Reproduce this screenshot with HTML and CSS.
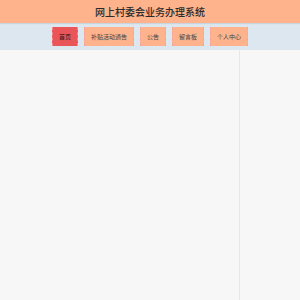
FILE: index.html
```html
<!DOCTYPE html>
<html lang="zh-CN">
<head>
    <meta charset="UTF-8">
    <meta name="viewport" content="width=device-width, initial-scale=1.0">
    <title>网上村委会业务办理系统</title>
    <link rel="stylesheet" href="styles.css">
</head>
<body>
    <header class="site-header">
        <h1>网上村委会业务办理系统</h1>
    </header>
    <nav class="site-nav">
        <a href="#" class="nav-item active">首页</a>
        <a href="#" class="nav-item">补贴活动通告</a>
        <a href="#" class="nav-item">公告</a>
        <a href="#" class="nav-item">留言板</a>
        <a href="#" class="nav-item">个人中心</a>
    </nav>
    <main class="content">
        <section class="main-area"></section>
        <aside class="side-area"></aside>
    </main>
</body>
</html>
```
FILE: styles.css
```css
* {
    margin: 0;
    padding: 0;
    box-sizing: border-box;
    font-family: "Noto Sans CJK SC", "Noto Sans", sans-serif;
}

html, body {
    width: 100%;
    height: 100%;
    background-color: #f7f7f7;
}

body {
    display: flex;
    flex-direction: column;
}

.site-header {
    height: 23px;
    background-color: #ffb38c;
    text-align: center;
    box-shadow: 0 1px 1px rgba(0, 0, 0, 0.08);
    position: relative;
}

.site-header h1 {
    font-size: 10px;
    line-height: 23px;
    font-weight: 500;
    color: #2b2b2b;
}

.site-nav {
    height: 27px;
    background-color: #dce7f0;
    display: flex;
    justify-content: center;
    align-items: flex-start;
    gap: 6px;
    padding-top: 4px;
}

.nav-item {
    height: 19px;
    line-height: 19px;
    padding: 0 6px;
    font-size: 6px;
    color: #444;
    text-decoration: none;
    background-color: #ffb38c;
    border-left: 1px dashed #f4a3a0;
    border-right: 1px dashed #f4a3a0;
}

.nav-item.active {
    background-color: #ea5559;
    color: #3a1212;
    border-color: #f08c90;
}

.content {
    flex: 1;
    display: flex;
}

.main-area {
    flex: 1;
}

.side-area {
    width: 61px;
    border-left: 1px solid #e8e8e8;
}
```
